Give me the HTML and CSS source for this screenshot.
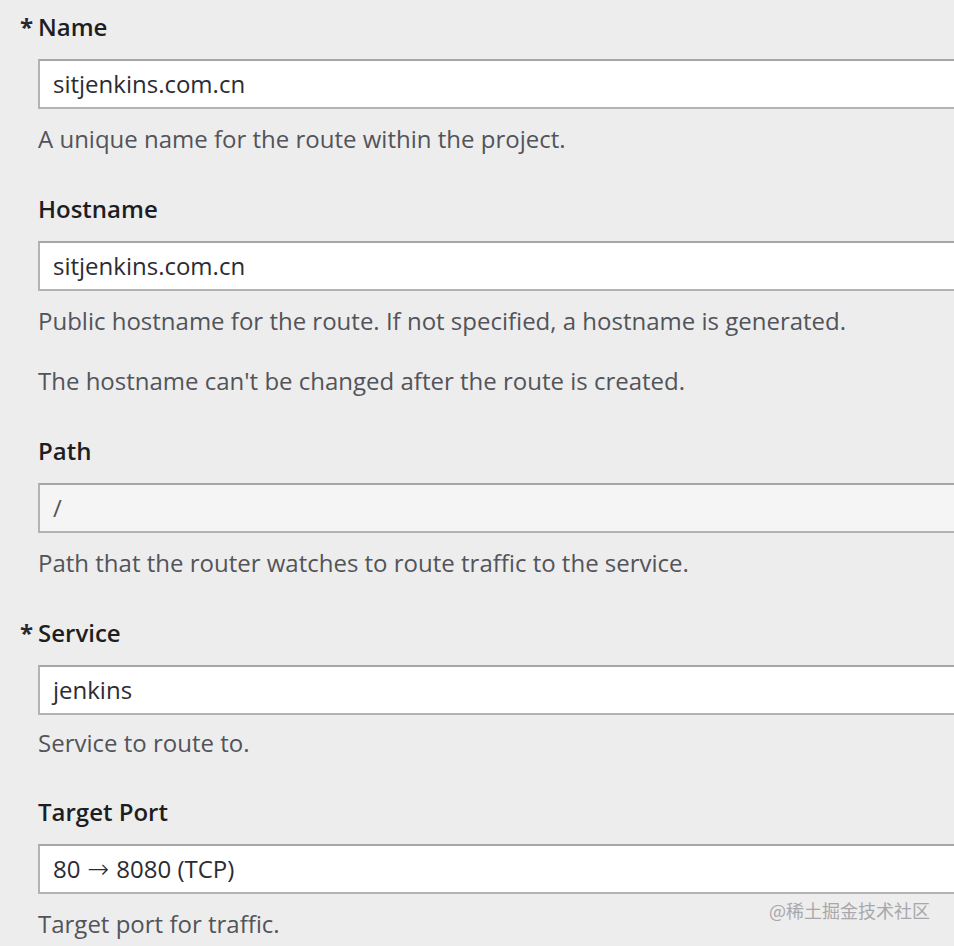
FILE: index.html
```html
<!DOCTYPE html>
<html>
<head>
<meta charset="utf-8">
<link rel="stylesheet" href="styles.css">
</head>
<body>
<form class="route-form">
  <div class="field">
    <label class="field-label required">Name</label>
    <div class="input">sitjenkins.com.cn</div>
    <p class="help">A unique name for the route within the project.</p>
  </div>
  <div class="field">
    <label class="field-label">Hostname</label>
    <div class="input">sitjenkins.com.cn</div>
    <p class="help">Public hostname for the route. If not specified, a hostname is generated.</p>
    <p class="help help-extra">The hostname can't be changed after the route is created.</p>
  </div>
  <div class="field">
    <label class="field-label">Path</label>
    <div class="input input-muted">/</div>
    <p class="help">Path that the router watches to route traffic to the service.</p>
  </div>
  <div class="field field-compact">
    <label class="field-label required">Service</label>
    <div class="input">jenkins</div>
    <p class="help">Service to route to.</p>
  </div>
  <div class="field">
    <label class="field-label">Target Port</label>
    <div class="input">80<span class="arrow">→</span>8080 (TCP)</div>
    <p class="help">Target port for traffic.</p>
  </div>
</form>
<div class="watermark">@稀土掘金技术社区</div>
</body>
</html>
```
FILE: styles.css
```css
html, body {
  margin: 0;
  padding: 0;
  background: #ededed;
  overflow: hidden;
  height: 946px;
  width: 954px;
  position: relative;
}
body {
  font-family: "Open Sans", "Noto Sans", sans-serif;
}
.route-form {
  padding: 10px 0 0 38px;
  display: flex;
  flex-direction: column;
  gap: 36px;
}
.field {
  display: flex;
  flex-direction: column;
}
.field-label {
  display: block;
  font-size: 24px;
  font-weight: 600;
  line-height: 34px;
  height: 34px;
  color: #1e1e22;
  margin-bottom: 15px;
}
.field-label.required::before {
  content: "*";
  display: inline-block;
  width: 18px;
  margin-left: -18px;
  font-weight: 700;
  color: #2a2630;
}
.input {
  box-sizing: border-box;
  width: 940px;
  height: 50px;
  background: #fff;
  border: 2px solid #b3b3b3;
  border-top-color: #a6a6a6;
  padding: 0 0 0 13px;
  font-size: 24px;
  line-height: 46px;
  color: #2b2b33;
}
.input-muted {
  background: #f5f5f5;
  color: #555;
}
.arrow {
  font-family: "DejaVu Sans", sans-serif;
  font-weight: 200;
  font-size: 26px;
  line-height: 20px;
  margin: 0 7px;
}
.help {
  margin: 13px 0 0;
  font-size: 24px;
  line-height: 34px;
  color: #52545a;
}
.help-extra {
  margin-top: 26px;
}
.field-compact .help {
  margin-top: 11px;
}
.field-compact {
  margin-bottom: -1px;
}
.watermark {
  position: absolute;
  right: 24px;
  top: 897px;
  font-family: "Noto Sans CJK SC", sans-serif;
  font-size: 18px;
  line-height: 26px;
  color: #a8a8ac;
}
```
